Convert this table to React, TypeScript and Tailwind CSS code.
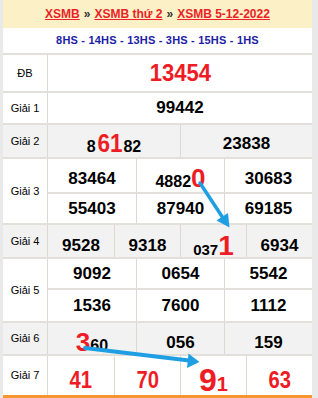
import type { ReactNode } from "react";

const font = { fontFamily: '"Liberation Sans", Arial, sans-serif' };

function Row({ label, h, grey, children }: { label: string; h: string; grey?: boolean; children: ReactNode }) {
  return (
    <div className={`flex border-t-2 border-[#e3dfdb] ${h} ${grey ? "bg-[#f2f2f2]" : "bg-white"}`}>
      <div className="w-[45px] shrink-0 flex items-center justify-center text-[11px] text-black border-r border-[#dcd8d4]">
        {label}
      </div>
      <div className="flex-1 flex flex-col">{children}</div>
    </div>
  );
}

function Cells({ cols, items, className }: { cols: string; items: ReactNode[]; className?: string }) {
  return (
    <div className={`grid ${cols} ${className ?? "flex-1"}`}>
      {items.map((it, i) => (
        <div
          key={i}
          className={`flex items-center justify-center text-[17px] font-bold text-black ${i > 0 ? "border-l border-[#dcd8d4]" : ""}`}
        >
          {it}
        </div>
      ))}
    </div>
  );
}

const Red = ({ children, size }: { children: ReactNode; size: string }) => (
  <span className={`inline-block text-[#ee1c25] font-bold ${size}`}>{children}</span>
);

export default function App() {
  return (
    <div className="relative w-[318px] h-[398px] bg-[#e9e9e9] overflow-hidden" style={font}>
      <div className="ml-[3px] w-[309px] h-full flex flex-col bg-white">
        <div className="h-[28px] bg-[#fcf0c6] flex items-center justify-center text-[12px] font-bold text-[#333]">
          <a className="text-[#ea1f27] underline decoration-[#ea1f27]">XSMB</a>
          <span className="mx-[4px]">»</span>
          <a className="text-[#ea1f27] underline decoration-[#ea1f27]">XSMB thứ 2</a>
          <span className="mx-[4px]">»</span>
          <a className="text-[#ea1f27] underline decoration-[#ea1f27]">XSMB 5-12-2022</a>
        </div>
        <div className="h-[25px] flex items-center justify-center text-[11px] font-bold text-[#1d1da6] tracking-[0.2px]">
          8HS - 14HS - 13HS - 3HS - 15HS - 1HS
        </div>

        <Row label="ĐB" h="h-[38px]">
          <Cells cols="grid-cols-1" items={[<Red size="text-[24px] scale-x-[0.92]">13454</Red>]} />
        </Row>

        <Row label="Giải 1" h="h-[32px]">
          <Cells cols="grid-cols-1" items={["99442"]} />
        </Row>

        <Row label="Giải 2" h="h-[34px]" grey>
          <Cells
            cols="grid-cols-2"
            items={[
              <span className="text-[16px]">
                8<Red size="text-[25px] scale-x-[0.9]">61</Red>82
              </span>,
              "23838",
            ]}
          />
        </Row>

        <Row label="Giải 3" h="h-[66px]">
          <Cells
            cols="grid-cols-3"
            className="h-[33px]"
            items={[
              "83464",
              <span className="text-[16px]">
                4882<Red size="text-[26px]">0</Red>
              </span>,
              "30683",
            ]}
          />
          <div className="border-t-2 border-[#e3dfdb] flex-1 flex">
            <Cells cols="grid-cols-3 w-full" items={["55403", "87940", "69185"]} />
          </div>
        </Row>

        <Row label="Giải 4" h="h-[34px]" grey>
          <Cells
            cols="grid-cols-4"
            items={[
              "9528",
              "9318",
              <span className="text-[15px]">
                037<Red size="text-[28px]">1</Red>
              </span>,
              "6934",
            ]}
          />
        </Row>

        <Row label="Giải 5" h="h-[64px]">
          <Cells cols="grid-cols-3" className="h-[29px]" items={["9092", "0654", "5542"]} />
          <div className="border-t-2 border-[#e3dfdb] flex-1 flex">
            <Cells cols="grid-cols-3 w-full" items={["1536", "7600", "1112"]} />
          </div>
        </Row>

        <Row label="Giải 6" h="h-[33px]" grey>
          <Cells
            cols="grid-cols-3"
            items={[
              <span className="text-[16px]">
                <Red size="text-[26px]">3</Red>60
              </span>,
              "056",
              "159",
            ]}
          />
        </Row>

        <Row label="Giải 7" h="h-[41px]">
          <Cells
            cols="grid-cols-4"
            items={[
              <Red size="text-[23px] scale-x-[0.88]">41</Red>,
              <Red size="text-[23px] scale-x-[0.88]">70</Red>,
              <span>
                <Red size="text-[32px]">9</Red>
                <Red size="text-[20px]">1</Red>
              </span>,
              <Red size="text-[23px] scale-x-[0.88]">63</Red>,
            ]}
          />
        </Row>

        <div className="h-[3px] bg-[#f5972e]" />
      </div>

      <svg className="absolute left-0 top-0 pointer-events-none" width="318" height="398" viewBox="0 0 318 398">
        <line x1="200" y1="183" x2="223" y2="218" stroke="#1e9fe3" strokeWidth="3.5" strokeLinecap="round" />
        <polygon points="229.5,227.5 216.5,220.5 228,213" fill="#1e9fe3" />
        <line x1="85" y1="348" x2="189" y2="360.5" stroke="#1e9fe3" strokeWidth="4" strokeLinecap="round" />
        <polygon points="199.5,362 187,368 188.5,353.5" fill="#1e9fe3" />
      </svg>
    </div>
  );
}
